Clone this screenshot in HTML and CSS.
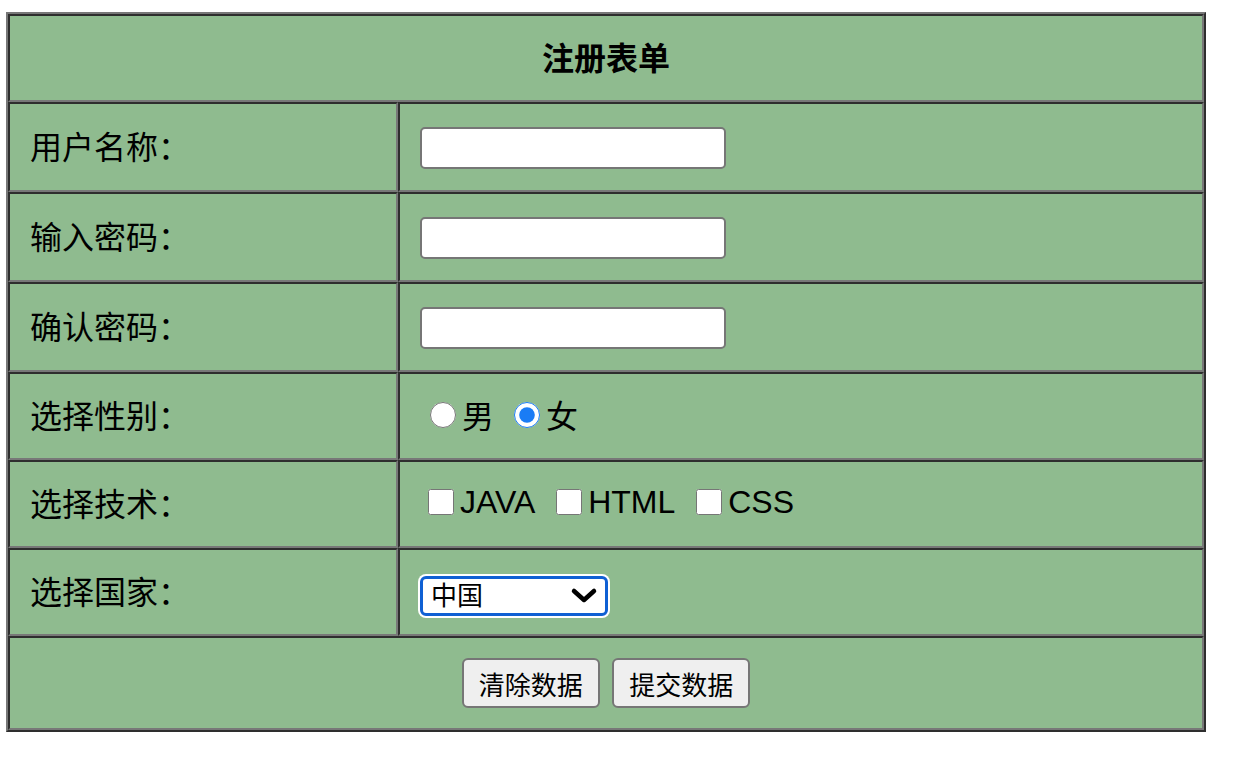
FILE: index.html
```html
<!DOCTYPE html>
<html lang="zh-CN">
<head>
    <meta charset="UTF-8">
    <meta name="viewport" content="width=device-width, initial-scale=1.0">
    <title>注册表单</title>
    <link rel="stylesheet" href="styles.css">
</head>
<body>
    <form class="reg-form">
        <table class="reg-table">
            <tr class="row-title">
                <th colspan="2">注册表单</th>
            </tr>
            <tr class="row-tall">
                <td class="label">用户名称：</td>
                <td class="field"><input type="text" class="text-input"></td>
            </tr>
            <tr class="row-tall">
                <td class="label">输入密码：</td>
                <td class="field"><input type="password" class="text-input"></td>
            </tr>
            <tr class="row-tall">
                <td class="label">确认密码：</td>
                <td class="field"><input type="password" class="text-input"></td>
            </tr>
            <tr class="row">
                <td class="label">选择性别：</td>
                <td class="field">
                    <label class="choice-radio"><input type="radio" name="sex" class="radio">男</label>
                    <label class="choice-radio"><input type="radio" name="sex" class="radio" checked>女</label>
                </td>
            </tr>
            <tr class="row">
                <td class="label">选择技术：</td>
                <td class="field">
                    <label class="choice-check"><input type="checkbox" class="check">JAVA</label>
                    <label class="choice-check"><input type="checkbox" class="check">HTML</label>
                    <label class="choice-check"><input type="checkbox" class="check">CSS</label>
                </td>
            </tr>
            <tr class="row">
                <td class="label">选择国家：</td>
                <td class="field">
                    <span class="select-wrap">
                        <select class="country">
                            <option>中国</option>
                            <option>美国</option>
                            <option>日本</option>
                        </select>
                        <svg class="chevron" width="30" height="18" viewBox="0 0 30 18">
                            <path d="M5 4 L15 13 L25 4" fill="none" stroke="#000" stroke-width="4.5" stroke-linecap="round" stroke-linejoin="round"/>
                        </svg>
                    </span>
                </td>
            </tr>
            <tr class="row-buttons">
                <td colspan="2" class="buttons">
                    <button type="reset" class="btn">清除数据</button>
                    <button type="button" class="btn">提交数据</button>
                </td>
            </tr>
        </table>
    </form>
</body>
</html>
```

FILE: styles.css
```css
body {
    margin: 0;
    padding: 12px 0 0 6px;
    background-color: white;
    font-family: "Liberation Sans", "Noto Sans CJK SC", sans-serif;
    color: #000;
}
.reg-form {
    margin: 0;
}
.reg-table {
    width: 1200px;
    border-collapse: separate;
    border-spacing: 0;
    background-color: #8fbb8f;
    border: 2px solid;
    border-color: #787878 #2e2e2e #2e2e2e #787878;
}
.reg-table th,
.reg-table td {
    border: 2px solid;
    border-color: #2e2e2e #787878 #787878 #2e2e2e;
    padding: 0 20px 4px;
    vertical-align: middle;
}
.reg-table th {
    font-size: 32px;
    font-weight: bold;
    text-align: center;
}
.row-title {
    height: 88px;
}
.row-tall {
    height: 90px;
}
.row {
    height: 88px;
}
.row-buttons {
    height: 94px;
}
.label {
    width: 346px;
    font-size: 32px;
    text-align: left;
}
.field {
    font-size: 32px;
}
.text-input {
    box-sizing: border-box;
    width: 306px;
    height: 42px;
    margin: 6px 0 0 0;
    border: 2px solid #767676;
    border-radius: 5px;
    background-color: white;
    vertical-align: middle;
    font-size: 26px;
}
.choice-radio {
    margin-right: 1px;
}
.choice-check {
    margin-right: 4px;
}
.radio {
    width: 26px;
    height: 26px;
    margin: 0 6px 0 10px;
    vertical-align: 0;
    accent-color: #1a7cf5;
}
.check {
    width: 26px;
    height: 26px;
    margin: 0 6px 0 8px;
    vertical-align: -2px;
}
.select-wrap {
    position: relative;
    display: inline-block;
    vertical-align: middle;
    margin-top: 12px;
}
.country {
    box-sizing: border-box;
    appearance: none;
    -webkit-appearance: none;
    width: 188px;
    height: 40px;
    padding: 0 0 0 8px;
    border: 3px solid #0f60d4;
    border-radius: 6px;
    box-shadow: 0 0 0 2px #ffffff;
    background-color: white;
    font-family: "Liberation Sans", "Noto Sans CJK SC", sans-serif;
    font-size: 26px;
    color: #000;
    outline: none;
}
.chevron {
    position: absolute;
    right: 9px;
    top: 11px;
    pointer-events: none;
}
.buttons {
    text-align: center;
}
.btn {
    box-sizing: border-box;
    width: 138px;
    height: 50px;
    margin: 4px 4px 0;
    padding: 0;
    border: 2px solid #767676;
    border-radius: 6px;
    background-color: #efefef;
    font-family: "Liberation Sans", "Noto Sans CJK SC", sans-serif;
    font-size: 26px;
    color: #000;
    cursor: pointer;
}
```
